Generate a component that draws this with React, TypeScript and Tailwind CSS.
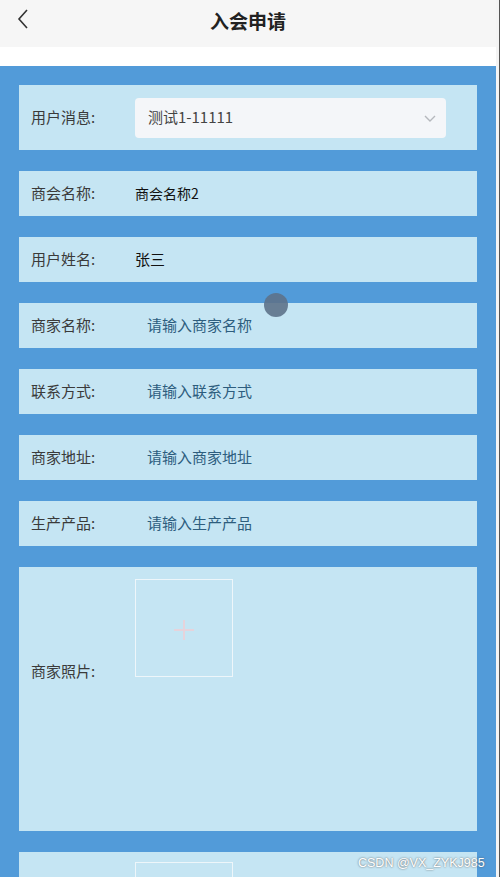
import React from 'react';

const font = { fontFamily: '"Noto Sans CJK SC", "Noto Sans", sans-serif' };

const inputRows = [
    { label: '商家名称:', placeholder: '请输入商家名称' },
    { label: '联系方式:', placeholder: '请输入联系方式' },
    { label: '商家地址:', placeholder: '请输入商家地址' },
    { label: '生产产品:', placeholder: '请输入生产产品' },
];

function Upload() {
    return (
        <div className="w-[98px] h-[98px] border border-[#eef6fa] flex items-center justify-center shrink-0">
            <svg width="22" height="22" viewBox="0 0 22 22" className="mt-[4px]">
                <path d="M11 1v20M1 11h20" stroke="#e6d3db" strokeWidth="2" />
            </svg>
        </div>
    );
}

export default function App() {
    return (
        <div className="relative w-[500px] h-[877px] overflow-hidden bg-white flex" style={font}>
            <div className="w-[496px] flex flex-col">
                <div className="h-[47px] shrink-0 bg-[#f6f6f6] flex items-center relative">
                    <svg className="absolute left-[16px] top-[8px]" width="14" height="22" viewBox="0 0 14 22">
                        <path d="M11 2L3 11l8 9" stroke="#333" strokeWidth="1.6" fill="none" />
                    </svg>
                    <div className="w-full text-center text-[19px] font-bold text-[#222] -mt-[5px]">入会申请</div>
                </div>
                <div className="h-[19px] shrink-0 bg-white" />
                <div className="flex-1 bg-[#529bd9] px-[19px] pt-[19px] flex flex-col gap-[21px]">
                    <div className="h-[65px] shrink-0 bg-[#c5e5f3] flex items-center pl-[12px]">
                        <div className="w-[104px] text-[15px] text-[#3a3a3a]">用户消息:</div>
                        <div className="w-[311px] h-[40px] bg-[#f4f6f9] rounded-[4px] flex items-center justify-between pl-[13px] pr-[9px]">
                            <span className="text-[15px] text-[#444]">测试1-11111</span>
                            <svg width="14" height="10" viewBox="0 0 14 10">
                                <path d="M2 3l5 5 5-5" stroke="#b5b8bd" strokeWidth="1.4" fill="none" />
                            </svg>
                        </div>
                    </div>
                    <div className="h-[45px] shrink-0 bg-[#c5e5f3] flex items-center pl-[12px]">
                        <div className="w-[104px] text-[15px] text-[#3a3a3a]">商会名称:</div>
                        <div className="text-[14px] text-[#111]">商会名称2</div>
                    </div>
                    <div className="h-[45px] shrink-0 bg-[#c5e5f3] flex items-center pl-[12px]">
                        <div className="w-[104px] text-[15px] text-[#3a3a3a]">用户姓名:</div>
                        <div className="text-[15px] text-[#111]">张三</div>
                    </div>
                    {inputRows.map((r) => (
                        <div key={r.label} className="h-[45px] shrink-0 bg-[#c5e5f3] flex items-center pl-[12px]">
                            <div className="w-[104px] text-[15px] text-[#3a3a3a]">{r.label}</div>
                            <div className="pl-[12px] text-[15px] text-[#2d5d7e]">{r.placeholder}</div>
                        </div>
                    ))}
                    <div className="h-[264px] shrink-0 bg-[#c5e5f3] flex items-start pl-[12px] pt-[12px]">
                        <div className="w-[104px] text-[15px] text-[#3a3a3a] mt-[81px]">商家照片:</div>
                        <Upload />
                    </div>
                    <div className="h-[60px] shrink-0 bg-[#c5e5f3] flex items-start pl-[12px] pt-[10px]">
                        <div className="w-[104px]" />
                        <Upload />
                    </div>
                </div>
            </div>
            <div className="w-[3px] bg-[#f4f4f4]" />
            <div className="w-[1px] bg-[#555]" />
            <div className="absolute left-[264px] top-[293px] w-[24px] h-[24px] rounded-full bg-[#5d7289] opacity-90" />
            <div className="absolute left-[358px] top-[854px] text-[12.5px] text-white [text-shadow:0_0_2px_#555]" style={{ fontFamily: '"Liberation Sans", Arial, sans-serif' }}>CSDN @VX_ZYKJ985</div>
        </div>
    );
}
